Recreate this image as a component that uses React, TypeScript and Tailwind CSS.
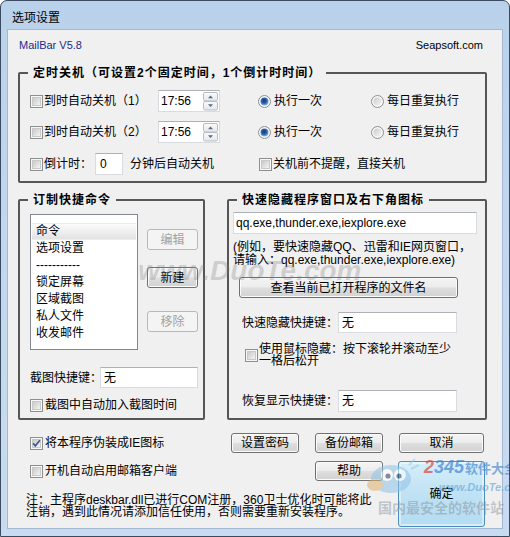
import React from "react";

const F = "font-['Liberation_Sans','Noto_Sans_CJK_SC',sans-serif]";

function Check({ checked = false }: { checked?: boolean }) {
  return (
    <svg width="13" height="13" viewBox="0 0 13 13" className="block shrink-0">
      <defs>
        <linearGradient id="cbg" x1="0" y1="0" x2="1" y2="1">
          <stop offset="0" stopColor="#c6c6c6" />
          <stop offset="1" stopColor="#f6f6f6" />
        </linearGradient>
      </defs>
      <rect x="0.5" y="0.5" width="12" height="12" fill="#f7f7f7" stroke="#8e8f8f" />
      <rect x="2.5" y="2.5" width="8" height="8" fill="url(#cbg)" stroke="#c9c9c9" />
      {checked && (
        <path d="M3.1 6.2 L5.3 8.9 L9.9 3.3" fill="none" stroke="#3d5a96" strokeWidth="1.7" />
      )}
    </svg>
  );
}

function Radio({ checked = false }: { checked?: boolean }) {
  return (
    <svg width="13" height="13" viewBox="0 0 13 13" className="block shrink-0">
      <defs>
        <linearGradient id="rbg" x1="0" y1="0" x2="1" y2="1">
          <stop offset="0" stopColor="#cacaca" />
          <stop offset="1" stopColor="#f7f7f7" />
        </linearGradient>
        <radialGradient id="rdot" cx="0.45" cy="0.4" r="0.6">
          <stop offset="0" stopColor="#18366e" />
          <stop offset="0.55" stopColor="#2c62ae" />
          <stop offset="1" stopColor="#86b8e8" />
        </radialGradient>
      </defs>
      <circle cx="6.5" cy="6.5" r="6" fill="#f7f7f7" stroke="#8e8f8f" />
      <circle cx="6.5" cy="6.5" r="4" fill={checked ? "url(#rdot)" : "url(#rbg)"} />
    </svg>
  );
}

function Spin() {
  return (
    <svg width="15" height="19" viewBox="0 0 15 19" className="block shrink-0">
      <defs>
        <linearGradient id="spg" x1="0" y1="0" x2="0" y2="1">
          <stop offset="0" stopColor="#fbfbfb" />
          <stop offset="1" stopColor="#e4e6ea" />
        </linearGradient>
      </defs>
      <rect x="0.5" y="0.5" width="14" height="8.5" rx="1.5" fill="url(#spg)" stroke="#b9bcc1" />
      <rect x="0.5" y="9.5" width="14" height="8.5" rx="1.5" fill="url(#spg)" stroke="#b9bcc1" />
      <path d="M5 6.2 L7.5 3.6 L10 6.2Z" fill="#5a6a88" />
      <path d="M5 12.3 L7.5 14.9 L10 12.3Z" fill="#5a6a88" />
    </svg>
  );
}

function Btn({
  children,
  className = "",
  disabled = false,
}: {
  children: React.ReactNode;
  className?: string;
  disabled?: boolean;
}) {
  return (
    <div
      className={`flex items-center justify-center rounded-[3px] border leading-[14px] ${
        disabled
          ? "border-[#b5b9bc] bg-[#f4f4f4] text-[#a2a2a2]"
          : "border-[#707070] bg-[linear-gradient(to_bottom,#f4f4f4_0%,#ececec_48%,#dedede_52%,#d2d2d2_100%)] shadow-[inset_0_0_0_1px_#fbfbfb]"
      } ${className}`}
    >
      {children}
    </div>
  );
}

function Field({ className = "", children }: { className?: string; children?: React.ReactNode }) {
  return (
    <div
      className={`flex items-center bg-white border border-[#d8dbe0] border-t-[#aeb1b7] whitespace-nowrap ${className}`}
    >
      {children}
    </div>
  );
}

function SpinField() {
  return (
    <Field className="w-[62px] h-[22px] justify-between pl-[2px] pr-[1px]">
      <span>17:56</span>
      <Spin />
    </Field>
  );
}

export default function App() {
  return (
    <div
      className={`relative w-[510px] h-[537px] overflow-hidden rounded-t-[7px] border border-[#3a4a5f] bg-[linear-gradient(to_bottom,#b9d1ea,#c2d7ee_40%,#c8dbf0)] ${F} text-[12px] leading-[16px] text-black`}
    >
      <div className="h-[29px] pl-[11px] pt-[5px] flex items-center text-[12px]">选项设置</div>

      <div className="mx-[7px] h-[498px] bg-[#f0f0f0] shadow-[0_0_0_1px_#a3b9d3] flex flex-col">
        {/* header */}
        <div className="mt-[7px] h-[16px] pl-[11px] pr-[19px] flex items-center justify-between text-[11px]">
          <span className="text-[#1c2a90]">MailBar V5.8</span>
          <span>Seapsoft.com</span>
        </div>

        {/* group 1 */}
        <fieldset className="mt-[12px] ml-[10px] mr-[15px] h-[118px] border-2 border-[#565656] rounded-[2px] min-w-0">
          <legend className="ml-[8px] px-[5px] font-bold tracking-[1px] leading-[16px]">
            定时关机（可设置2个固定时间，1个倒计时时间）
          </legend>
          <div className="pl-[10px] pt-[9px] flex flex-col">
            <div className="flex items-center h-[22px] whitespace-nowrap">
              <div className="w-[128px] flex items-center">
                <Check />
                <span className="ml-[1px]">到时自动关机（1）</span>
              </div>
              <SpinField />
              <div className="ml-[38px] w-[113px] flex items-center">
                <Radio checked />
                <span className="ml-[3px]">执行一次</span>
              </div>
              <div className="flex items-center">
                <Radio />
                <span className="ml-[3px]">每日重复执行</span>
              </div>
            </div>
            <div className="mt-[9px] flex items-center h-[22px] whitespace-nowrap">
              <div className="w-[128px] flex items-center">
                <Check />
                <span className="ml-[1px]">到时自动关机（2）</span>
              </div>
              <SpinField />
              <div className="ml-[38px] w-[113px] flex items-center">
                <Radio checked />
                <span className="ml-[3px]">执行一次</span>
              </div>
              <div className="flex items-center">
                <Radio />
                <span className="ml-[3px]">每日重复执行</span>
              </div>
            </div>
            <div className="mt-[10px] flex items-center h-[22px] whitespace-nowrap">
              <div className="w-[65px] flex items-center">
                <Check />
                <span className="ml-[1px]">倒计时：</span>
              </div>
              <Field className="w-[28px] h-[22px] pl-[4px]">0</Field>
              <span className="ml-[7px] w-[129px]">分钟后自动关机</span>
              <div className="flex items-center">
                <Check />
                <span className="ml-[1px]">关机前不提醒，直接关机</span>
              </div>
            </div>
          </div>
        </fieldset>

        {/* groups 2 & 3 */}
        <div className="mt-[9px] ml-[10px] flex">
          <fieldset className="w-[187px] h-[228px] border-2 border-[#565656] rounded-[2px] min-w-0">
            <legend className="ml-[8px] px-[5px] font-bold tracking-[1px] leading-[16px]">订制快捷命令</legend>
            <div className="pl-[10px] pt-[6px]">
              <div className="flex">
                <div className="w-[108px] h-[136px] bg-white border border-[#828790] pt-[8px] px-[1px] whitespace-nowrap">
                  <div className="h-[17px] leading-[15px] pl-[4px] bg-[linear-gradient(to_bottom,#fcfcfc,#e2e2e2)] border-y border-[#ececec]">
                    命令
                  </div>
                  <div className="h-[17px] leading-[17px] pl-[4px]">选项设置</div>
                  <div className="h-[17px] leading-[17px] pl-[4px]">-----------</div>
                  <div className="h-[17px] leading-[17px] pl-[4px]">锁定屏幕</div>
                  <div className="h-[17px] leading-[17px] pl-[4px]">区域截图</div>
                  <div className="h-[17px] leading-[17px] pl-[4px]">私人文件</div>
                  <div className="h-[17px] leading-[17px] pl-[4px]">收发邮件</div>
                </div>
                <div className="ml-[9px] pt-[15px] flex flex-col">
                  <Btn disabled className="w-[51px] h-[21px]">编辑</Btn>
                  <Btn className="mt-[17px] w-[51px] h-[21px]">新建</Btn>
                  <Btn disabled className="mt-[23px] w-[51px] h-[21px]">移除</Btn>
                </div>
              </div>
              <div className="mt-[17px] flex items-center h-[21px] whitespace-nowrap">
                <span className="w-[70px]">截图快捷键：</span>
                <Field className="w-[98px] h-[21px] pl-[3px]">无</Field>
              </div>
              <div className="mt-[9px] flex items-center h-[16px] whitespace-nowrap">
                <Check />
                <span className="ml-[2px]">截图中自动加入截图时间</span>
              </div>
            </div>
          </fieldset>

          <fieldset className="ml-[22px] w-[260px] h-[228px] border-2 border-[#565656] rounded-[2px] min-w-0">
            <legend className="ml-[8px] px-[5px] font-bold tracking-[1px] leading-[16px]">
              快速隐藏程序窗口及右下角图标
            </legend>
            <div className="pt-[4px]">
              <Field className="ml-[4px] w-[244px] h-[22px] pl-[2px]">qq.exe,thunder.exe,iexplore.exe</Field>
              <div className="ml-[4px] mt-[7px] leading-[13px] whitespace-nowrap">
                (例如，要快速隐藏QQ、迅雷和IE网页窗口，
                <br />
                请输入：qq.exe,thunder.exe,iexplore.exe)
              </div>
              <Btn className="ml-[10px] mt-[10px] w-[219px] h-[21px]">查看当前已打开程序的文件名</Btn>
              <div className="ml-[13px] mt-[14px] flex items-center h-[21px] whitespace-nowrap">
                <span className="w-[96px]">快速隐藏快捷键：</span>
                <Field className="w-[119px] h-[21px] pl-[3px]">无</Field>
              </div>
              <div className="ml-[16px] mt-[10px] flex items-center whitespace-nowrap">
                <Check />
                <div className="ml-[1px] leading-[12px]">
                  使用鼠标隐藏：按下滚轮并滚动至少
                  <br />
                  一格后松开
                </div>
              </div>
              <div className="ml-[13px] mt-[23px] flex items-center h-[22px] whitespace-nowrap">
                <span className="w-[96px]">恢复显示快捷键：</span>
                <Field className="w-[119px] h-[22px] pl-[3px]">无</Field>
              </div>
            </div>
          </fieldset>
        </div>

        {/* bottom */}
        <div className="mt-[13px] grid grid-cols-[223px_68px_16px_68px_15px_87px] grid-rows-[20px_20px_38px] gap-y-[8px]">
          <div className="col-start-1 row-start-1 pl-[22px] flex items-center whitespace-nowrap">
            <Check checked />
            <span className="ml-[2px]">将本程序伪装成IE图标</span>
          </div>
          <Btn className="col-start-2 row-start-1">设置密码</Btn>
          <Btn className="col-start-4 row-start-1">备份邮箱</Btn>
          <Btn className="col-start-6 row-start-1 ml-[1px] w-[85px]">取消</Btn>
          <div className="col-start-1 row-start-2 pl-[22px] flex items-center whitespace-nowrap">
            <Check />
            <span className="ml-[2px]">开机自动启用邮箱客户端</span>
          </div>
          <Btn className="col-start-4 row-start-2">帮助</Btn>
          <div className="col-start-6 row-start-2 row-span-2 flex items-center justify-center rounded-[3px] border border-[#4b8fc0] bg-[linear-gradient(to_bottom,#d6eef9,#bfe2f4_50%,#b4dcf1)] shadow-[inset_0_0_0_2px_rgba(255,255,255,0.45)]">
            确定
          </div>
          <div className="col-start-1 col-span-4 row-start-3 pl-[18px] pt-[5px] leading-[12px] whitespace-nowrap">
            注：主程序deskbar.dll已进行COM注册，360卫士优化时可能将此
            <br />
            注销，遇到此情况请添加信任使用，否则需要重新安装程序。
          </div>
        </div>
      </div>

      {/* watermarks */}
      <div className="absolute left-[137px] top-[256px] text-[28px] leading-[28px] font-bold italic text-[rgba(120,120,120,0.28)] whitespace-nowrap pointer-events-none">
        www.DuoTe.com
      </div>
      <svg
        className="absolute left-[364px] top-[454px] pointer-events-none"
        width="56"
        height="42"
        viewBox="0 0 56 42"
      >
        <g opacity="0.55">
          <ellipse cx="26" cy="24" rx="20" ry="14" fill="#8fc2e8" />
          <ellipse cx="10" cy="30" rx="8" ry="6" fill="#e0b26a" />
          <circle cx="22" cy="20" r="6" fill="#ffffff" />
          <circle cx="35" cy="20" r="6" fill="#ffffff" />
          <circle cx="23" cy="21" r="2.6" fill="#2b3b5a" />
          <circle cx="34" cy="21" r="2.6" fill="#2b3b5a" />
          <path d="M44 10 L50 4 M46 14 L54 10" stroke="#9cc9ea" strokeWidth="2" />
        </g>
      </svg>
      <div className="absolute left-[423px] top-[457px] flex items-baseline whitespace-nowrap pointer-events-none opacity-70">
        <span className="text-[18px] leading-[18px] font-bold italic text-[#e2453c]">2</span>
        <span className="text-[18px] leading-[18px] font-bold italic text-[#3f86d4]">345</span>
        <span className="ml-[1px] text-[13px] leading-[14px] font-bold text-[#4a8fd6]">软件大全</span>
      </div>
      <div className="absolute left-[438px] top-[480px] text-[11px] leading-[12px] font-bold italic text-[rgba(90,160,215,0.6)] whitespace-nowrap pointer-events-none">
        www.DuoTe.com
      </div>
      <div className="absolute left-[377px] top-[499px] text-[14px] leading-[16px] font-bold text-[rgba(130,140,150,0.45)] whitespace-nowrap pointer-events-none">
        国内最安全的软件站
      </div>
    </div>
  );
}
